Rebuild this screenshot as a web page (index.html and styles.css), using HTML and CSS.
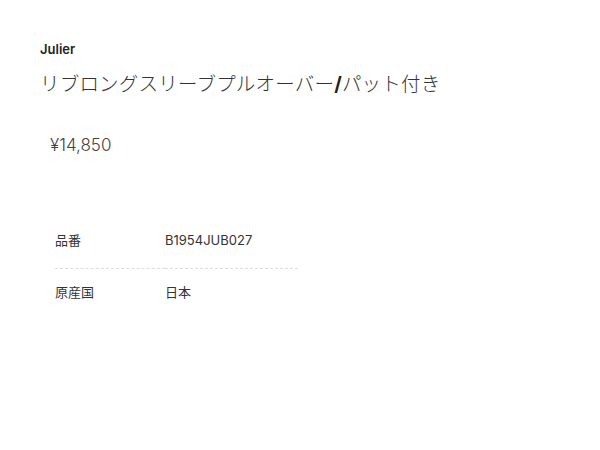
FILE: index.html
```html
<!DOCTYPE html>
<html lang="ja">
<head>
  <meta charset="UTF-8">
  <meta name="viewport" content="width=device-width, initial-scale=1.0">
  <title>Julier</title>
  <link rel="stylesheet" href="styles.css">
</head>
<body>
  <div class="product">
    <div class="brand">Julier</div>
    <h1 class="title">リブロングスリーブプルオーバー<span class="slash">/</span>パット付き</h1>
    <div class="price">¥14,850</div>

    <table class="spec">
      <tr>
        <th>品番</th>
        <td>B1954JUB027</td>
      </tr>
      <tr>
        <th>原産国</th>
        <td>日本</td>
      </tr>
    </table>
  </div>
</body>
</html>
```

FILE: styles.css
```css
body {
  margin: 0;
  font-family: Inter, "Noto Sans CJK JP", sans-serif;
  color: #333;
  background: #fff;
}
.product {
  padding: 41px 40px 0 40px;
}
.brand {
  font-size: 13px;
  font-weight: 600;
  color: #222;
  line-height: 16px;
}
.title {
  margin: 12px 0 0 0;
  font-size: 19.5px;
  font-weight: 300;
  line-height: 30px;
  color: #333;
  letter-spacing: 0.2px;
}
.title .slash {
  font-weight: 700;
  color: #222;
}
.price {
  margin: 34px 0 0 10px;
  font-size: 17px;
  font-weight: 300;
  color: #444;
  line-height: 24px;
}
.spec {
  margin: 60px 0 0 15px;
  border-collapse: collapse;
  width: 243px;
}
.spec th,
.spec td {
  text-align: left;
  font-size: 13px;
  font-weight: 400;
  color: #333;
  line-height: 18px;
  padding: 14px 0 19px 0;
  vertical-align: middle;
}
.spec th {
  width: 110px;
}
.spec tr + tr th,
.spec tr + tr td {
  border-top: 1px dashed #ddd;
}
```
